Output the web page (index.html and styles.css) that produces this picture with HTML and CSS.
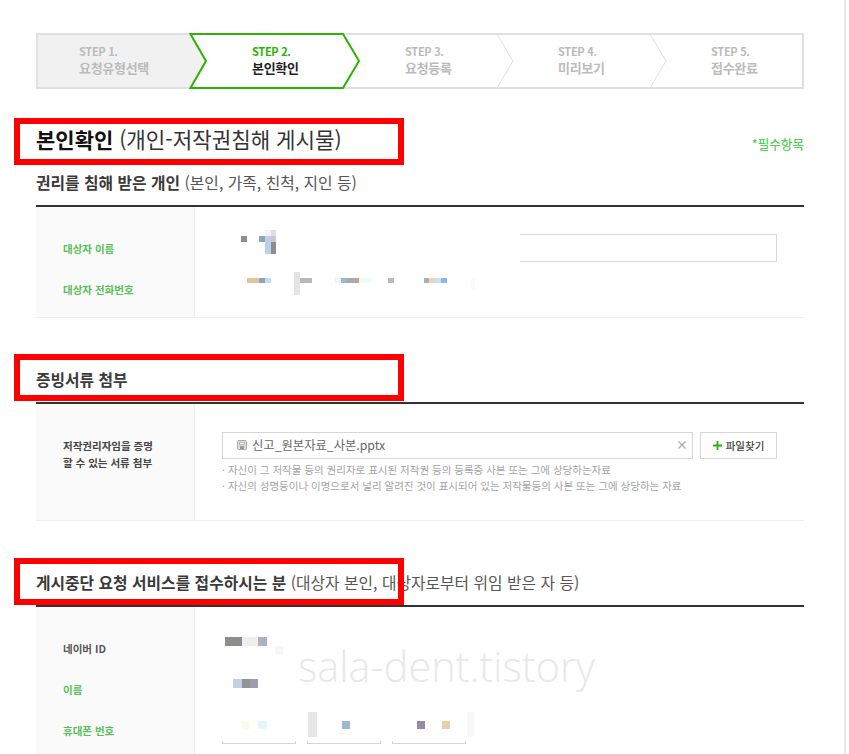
FILE: index.html
```html
<!DOCTYPE html>
<html lang="ko">
<head>
    <meta charset="UTF-8">
    <title>본인확인</title>
    <link rel="stylesheet" href="styles.css">
</head>
<body>
    <div class="page">

        <!-- Steps -->
        <div class="steps">
            <svg class="steps-bg" width="768" height="56" viewBox="0 0 768 56">
                <rect x="1" y="1" width="766" height="54" fill="#fff" stroke="#e0e0e0" stroke-width="2"/>
                <polygon points="1,1 154,1 170,28 154,55 1,55" fill="#f1f1f1" stroke="#e0e0e0" stroke-width="2"/>
                <polyline points="461,1 477,28 461,55" fill="none" stroke="#e0e0e0"/>
                <polyline points="614,1 630,28 614,55" fill="none" stroke="#e0e0e0"/>
                <polygon points="154.500,1 307,1 323,28 307,55 154.500,55 170,28" fill="#fff" stroke="#2db400" stroke-width="2"/>
            </svg>
            <div class="step"><span class="step-no">STEP 1.</span><span class="step-name">요청유형선택</span></div>
            <div class="step active"><span class="step-no">STEP 2.</span><span class="step-name">본인확인</span></div>
            <div class="step"><span class="step-no">STEP 3.</span><span class="step-name">요청등록</span></div>
            <div class="step"><span class="step-no">STEP 4.</span><span class="step-name">미리보기</span></div>
            <div class="step"><span class="step-no">STEP 5.</span><span class="step-name">접수완료</span></div>
        </div>

        <div class="title-row">
            <h2>본인확인 <span>(개인-저작권침해 게시물)</span></h2>
            <span class="required">*필수항목</span>
        </div>

        <!-- 대상자 -->
        <h3 class="first">권리를 침해 받은 개인 <span>(본인, 가족, 친척, 지인 등)</span></h3>
        <div class="form-row row-person">
            <div class="labels">
                <p class="green">대상자 이름</p>
                <p class="green">대상자 전화번호</p>
            </div>
            <div class="fields">
                <div class="field"><input class="text-input" type="text"></div>
                <div class="field"></div>
            </div>
        </div>

        <!-- 증빙서류 -->
        <h3>증빙서류 첨부</h3>
        <div class="form-row row-file">
            <div class="labels">
                <p class="dark">저작권리자임을 증명<br>할 수 있는 서류 첨부</p>
            </div>
            <div class="fields">
                <div class="file-line">
                    <div class="file-box">
                        <svg class="file-icon" width="10" height="10" viewBox="0 0 10 10">
                            <rect x="0.500" y="0.500" width="9" height="9" rx="1" fill="#ddd" stroke="#aaa"/>
                            <rect x="2.500" y="2.500" width="5" height="2" fill="#fff" stroke="#aaa" stroke-width="0.800"/>
                            <rect x="3" y="6" width="4" height="3" fill="#999"/>
                        </svg>
                        <span class="file-name">신고_원본자료_사본.pptx</span>
                        <svg class="file-del" width="8" height="8" viewBox="0 0 8 8">
                            <path d="M0.500 0.500 L7.500 7.500 M7.500 0.500 L0.500 7.500" stroke="#aaa" stroke-width="1.300"/>
                        </svg>
                    </div>
                    <div class="file-btn">
                        <svg class="plus" width="9" height="9" viewBox="0 0 9 9">
                            <path d="M4.500 0 V9 M0 4.500 H9" stroke="#2db400" stroke-width="1.800"/>
                        </svg>
                        파일찾기
                    </div>
                </div>
                <ul class="notes">
                    <li>자신이 그 저작물 등의 권리자로 표시된 저작권 등의 등록증 사본 또는 그에 상당하는자료</li>
                    <li>자신의 성명등이나 이명으로서 널리 알려진 것이 표시되어 있는 저작물등의 사본 또는 그에 상당하는 자료</li>
                </ul>
            </div>
        </div>

        <!-- 접수자 -->
        <h3>게시중단 요청 서비스를 접수하시는 분 <span>(대상자 본인, 대상자로부터 위임 받은 자 등)</span></h3>
        <div class="form-row row-sender">
            <div class="labels">
                <p class="dark-thin">네이버 ID</p>
                <p class="green">이름</p>
                <p class="green">휴대폰 번호</p>
            </div>
            <div class="fields">
                <div class="phone-line">
                    <input class="text-input" type="text">
                    <input class="text-input" type="text">
                    <input class="text-input" type="text">
                </div>
            </div>
        </div>

        <!-- mosaic over the personal data -->
        <svg class="mosaic" width="845" height="754" viewBox="0 0 845 754">
            <rect x="195" y="208" width="325" height="108" fill="#fff"/>
            <rect x="195" y="608" width="320" height="133" fill="#fff"/>

            <rect x="241" y="236" width="6" height="6" fill="#8f8f8c"/>
            <rect x="259" y="236" width="6" height="6" fill="#8aa5bc"/>
            <rect x="265" y="230" width="6" height="6" fill="#f3f3fa"/>
            <rect x="271" y="230" width="5" height="6" fill="#dcdcea"/>
            <rect x="265" y="236" width="6" height="6" fill="#c0d0e8"/>
            <rect x="271" y="236" width="5" height="6" fill="#c8c8d0"/>
            <rect x="265" y="242" width="6" height="12" fill="#bccfec"/>
            <rect x="271" y="242" width="5" height="12" fill="#8c8c8c"/>

            <rect x="247" y="278" width="12" height="5" fill="#e3c29f"/>
            <rect x="259" y="278" width="6" height="5" fill="#8fa3b3"/>
            <rect x="265" y="278" width="6" height="5" fill="#c0dcf8"/>
            <rect x="294" y="272" width="6" height="23" fill="#e4e4e4"/>
            <rect x="300" y="278" width="12" height="5" fill="#b9b9b9"/>
            <rect x="335" y="278" width="6" height="5" fill="#e6f4fb"/>
            <rect x="341" y="278" width="6" height="5" fill="#98b8d4"/>
            <rect x="347" y="278" width="12" height="5" fill="#aaaaaa"/>
            <rect x="359" y="278" width="6" height="5" fill="#fdf6e8"/>
            <rect x="365" y="278" width="6" height="5" fill="#e6fcfc"/>
            <rect x="388" y="278" width="6" height="5" fill="#bbbbbb"/>
            <rect x="424" y="278" width="5" height="5" fill="#adb0b5"/>
            <rect x="429" y="278" width="6" height="5" fill="#e8d8b8"/>
            <rect x="435" y="278" width="6" height="5" fill="#c8e0f8"/>
            <rect x="441" y="278" width="6" height="5" fill="#8cb8e8"/>
            <rect x="471" y="279" width="4" height="10" fill="#fafafa"/>

            <rect x="225" y="637" width="17" height="9" fill="#8f8d8b"/>
            <rect x="242" y="637" width="8" height="9" fill="#e8f0f8"/>
            <rect x="250" y="637" width="8" height="9" fill="#f6eee4"/>
            <rect x="258" y="637" width="9" height="9" fill="#abafc8"/>
            <rect x="275" y="646" width="8" height="8" fill="#f6f6f6"/>

            <rect x="233" y="679" width="9" height="9" fill="#c0d2e4"/>
            <rect x="242" y="679" width="8" height="9" fill="#949494"/>
            <rect x="250" y="679" width="8" height="9" fill="#9c9cb0"/>

            <rect x="242" y="721" width="8" height="8" fill="#fdfbe8"/>
            <rect x="258" y="721" width="9" height="8" fill="#def8fc"/>
            <rect x="308" y="712" width="9" height="25" fill="#e6e6e6"/>
            <rect x="342" y="721" width="8" height="8" fill="#9cb8d4"/>
            <rect x="417" y="721" width="8" height="8" fill="#9888a8"/>
            <rect x="442" y="721" width="8" height="8" fill="#e8d0a8"/>
            <rect x="467" y="712" width="7" height="25" fill="#f8f8f8"/>
        </svg>

        <div class="watermark">sala-dent.tistory</div>

        <!-- red marks -->
        <div class="mark mark-1"></div>
        <div class="mark mark-2"></div>
        <div class="mark mark-3"></div>
    </div>
</body>
</html>
```

FILE: styles.css
```css
html, body {
    margin: 0;
    padding: 0;
    height: 754px;
    overflow: hidden;
    background: #fff;
}
body {
    font-family: "Noto Sans CJK KR", "Noto Sans", sans-serif;
    color: #333;
}
p, ul, h2, h3 {
    margin: 0;
    padding: 0;
}
.page {
    position: relative;
    box-sizing: border-box;
    width: 846px;
    height: 754px;
    padding: 33px 0 0 36px;
    border-right: 2px solid #e6e6e6;
    overflow: hidden;
}

/* steps */
.steps {
    position: relative;
    display: flex;
    width: 768px;
    height: 56px;
}
.steps-bg {
    position: absolute;
    top: 0;
    left: 0;
}
.step {
    position: relative;
    display: flex;
    flex-direction: column;
    box-sizing: border-box;
    width: 153px;
    padding: 10px 0 0 43px;
}
.step:first-of-type {
    width: 173px;
}
.step:last-child {
    width: 136px;
}
.step-no {
    font-size: 11px;
    line-height: 16px;
    font-weight: 700;
    color: #bbb;
    letter-spacing: -0.3px;
}
.step-name {
    font-size: 13px;
    line-height: 17px;
    font-weight: 700;
    color: #bbb;
    letter-spacing: -0.3px;
}
.step.active .step-no {
    color: #2db400;
}
.step.active .step-name {
    color: #222;
}

/* headings */
.title-row {
    display: flex;
    justify-content: space-between;
    align-items: center;
    width: 768px;
    height: 30px;
    margin-top: 35px;
}
h2 {
    font-size: 21px;
    line-height: 30px;
    font-weight: 700;
    color: #111;
}
h2 span {
    font-size: 21.2px;
    font-weight: 400;
    color: #333;
}
.required {
    position: relative;
    top: 4px;
    font-size: 12.6px;
    color: #33cc33;
}
h3 {
    width: 768px;
    margin-top: 52px;
    padding-bottom: 12px;
    border-bottom: 2px solid #333;
    font-size: 15.8px;
    line-height: 20px;
    font-weight: 700;
    color: #3a3a3a;
}
h3.first {
    margin-top: 19px;
}
h3 span {
    font-weight: 400;
    color: #555;
}

/* form rows */
.form-row {
    display: grid;
    grid-template-columns: 159px 1fr;
    width: 768px;
    border-bottom: 1px solid #eee;
}
.row-person {
    height: 110px;
}
.row-file {
    height: 116px;
}
.row-sender {
    height: 170px;
}
.labels {
    box-sizing: border-box;
    padding-left: 27px;
    background: #fafafa;
    border-right: 1px solid #eee;
}
.labels p {
    font-size: 10.5px;
    line-height: 41px;
    font-weight: 700;
}
.labels .green {
    color: #58bf58;
}
.labels .dark-thin {
    color: #555;
}
.row-person .labels {
    padding-top: 21px;
}
.row-sender .labels {
    padding-top: 21px;
}
.row-file .labels {
    padding-top: 33px;
}
.labels .dark {
    line-height: 17px;
    color: #444;
}
.fields {
    padding-left: 27px;
}
.row-person .fields {
    padding-top: 27px;
}
.row-sender .fields {
    padding-top: 109px;
}
.field {
    height: 41px;
}
.text-input {
    display: block;
    box-sizing: border-box;
    width: 555px;
    height: 28px;
    margin: 0;
    padding: 0;
    background: #fff;
    border: 1px solid #d6d6d6;
}

/* file box */
.row-file .fields {
    padding-top: 28px;
}
.file-line {
    display: flex;
    gap: 7px;
}
.file-box {
    display: flex;
    align-items: center;
    box-sizing: border-box;
    width: 471px;
    height: 27px;
    padding: 0 6px 2px 14px;
    border: 1px solid #d6d6d6;
}
.file-icon {
    margin-right: 5px;
}
.file-name {
    flex: 1;
    font-size: 12.3px;
    color: #666;
}
.file-btn {
    display: flex;
    align-items: center;
    justify-content: center;
    box-sizing: border-box;
    width: 77px;
    height: 27px;
    border: 1px solid #d6d6d6;
    font-size: 10.5px;
    font-weight: 500;
    color: #444;
}
.plus {
    margin-right: 4px;
}
.notes {
    margin-top: 3px;
    list-style: none;
    font-size: 10.5px;
    line-height: 16px;
    color: #a4a4a4;
}
.notes li::before {
    content: "· ";
}
.phone-line {
    display: flex;
    gap: 11px;
}
.phone-line .text-input {
    width: 74px;
}

/* overlays */
.mosaic {
    position: absolute;
    top: 0;
    left: 0;
}
.watermark {
    position: absolute;
    top: 638px;
    left: 298px;
    font-family: "Open Sans", sans-serif;
    font-size: 41.4px;
    line-height: 56px;
    font-weight: 300;
    color: #e8e8e8;
    white-space: nowrap;
}
.mark {
    position: absolute;
    left: 14px;
    box-sizing: border-box;
    width: 390px;
    height: 47px;
    border: 6px solid #f00;
}
.mark-1 {
    top: 118px;
}
.mark-2 {
    top: 354px;
}
.mark-3 {
    top: 558px;
}
```
